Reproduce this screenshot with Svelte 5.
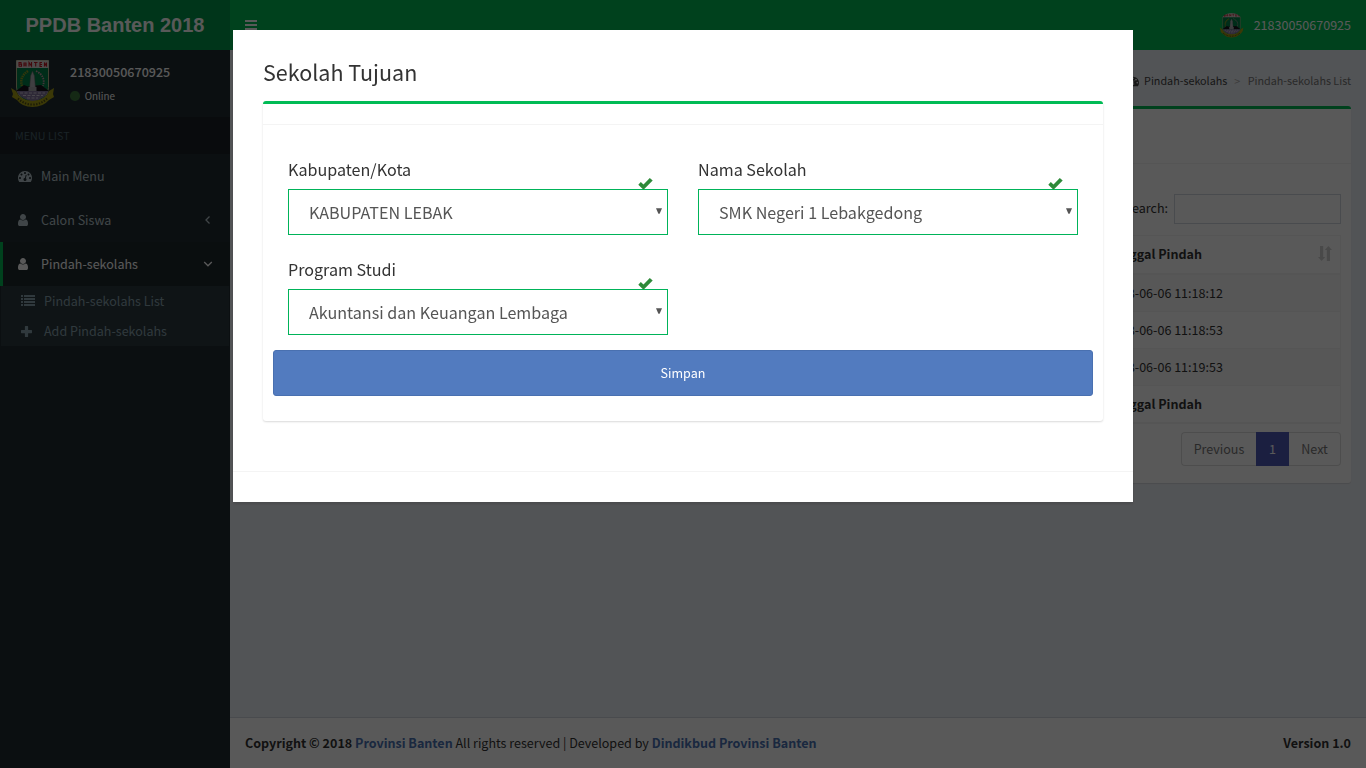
<script>
  const rows = ['2018-06-06 11:18:12', '2018-06-06 11:18:53', '2018-06-06 11:19:53'];
  const fields = [
    { label: 'Kabupaten/Kota', value: 'KABUPATEN LEBAK' },
    { label: 'Nama Sekolah', value: 'SMK Negeri 1 Lebakgedong' },
    { label: 'Program Studi', value: 'Akuntansi dan Keuangan Lembaga' }
  ];
</script>

{#snippet emblem()}
  <svg viewBox="0 0 45 48" class="emblem" preserveAspectRatio="none">
    <path d="M6.500 .5h32v27q0 12-16 16Q6.500 39 6.500 27z" fill="#008048" stroke="#b9b78c" stroke-width="1" />
    <path d="M6.500 .5h32V8h-32z" fill="#dcd6d4" />
    <path d="M9 2v4.500M9 2.500h2v1.800H9h2.500v2H9M14 6.500V3h2v3.500M14 5h2M19 6.500V2.500l2.500 3.500V2M24 2.500h3.500M25.700 2.500v4M32 2.500h-2v4h2M30 4.500h2M34.500 6.500v-4l2 4v-4" fill="none" stroke="#c01822" stroke-width="1.100" />
    <path d="M18 11q-9 6-6 15" fill="none" stroke="#8f9a20" stroke-width="2.500" stroke-dasharray="1.500 .8" />
    <path d="M26 11q10 5 7 15" fill="none" stroke="#c995a5" stroke-width="1.800" stroke-dasharray="1.500 1" />
    <path d="M6 31l8-6 4 1.500 8-1 5-.5 8 6z" fill="#17131b" />
    <path d="M7 31h31q-1 7-15.500 11Q8 37 7 31z" fill="#83759f" />
    <path d="M10 33h25M13 35.500h20M17 38h11" stroke="#cfc8d8" stroke-width="1.200" stroke-dasharray="3 1.500" />
    <path d="M19.500 29l1-13 2-5 2 5 1 13z" fill="#b4b4ba" stroke="#666" stroke-width=".5" />
    <path d="M18.500 27h8v4h-8z" fill="#a8a8b0" />
    <path d="M1 28l5 3q3 9 16.500 10Q36 40 39 31l5-3-1 6 1 3-5 3q-6 7-16.500 7T7 40l-5-3 1-3z" fill="#a8a014" />
    <path d="M8 38.500q6 6 14.500 6T37 38.500" fill="none" stroke="#4b4a15" stroke-width="2" stroke-dasharray="1.300 1.500" />
  </svg>
{/snippet}

{#snippet user()}
  <svg class="ic" width="10" height="14" viewBox="256 0 1280 1792"><path fill="currentColor" d="M1536 1399q0 109-62.500 187t-150.500 78h-854q-88 0-150.500-78t-62.500-187q0-85 8.500-160.500t31.500-152 58.500-131 94-89 134.500-34.500q131 128 313 128t313-128q76 0 134.500 34.500t94 89 58.500 131 31.500 152 8.500 160.500zm-256-887q0 159-112.500 271.500t-271.500 112.500-271.500-112.500-112.500-271.500 112.500-271.500 271.500-112.500 271.500 112.500 112.500 271.500z" /></svg>
{/snippet}

{#snippet gauge(size)}
  <svg class="ic" width={size} height={size} viewBox="0 0 1792 1792"><path fill="currentColor" d="M384 1152q0-53-37.500-90.500t-90.500-37.500-90.500 37.500-37.500 90.500 37.500 90.500 90.500 37.500 90.500-37.500 37.500-90.500zm192-448q0-53-37.500-90.500t-90.500-37.500-90.500 37.500-37.500 90.500 37.500 90.500 90.500 37.500 90.500-37.500 37.500-90.500zm428 481l101-382q6-26-7.500-48.500t-38.500-29.500-48 6.500-30 39.500l-101 382q-60 5-107 43.500t-63 98.500q-20 77 20 146t117 89 146-20 89-117q16-60-6-117t-72-91zm660-33q0-53-37.500-90.500t-90.500-37.500-90.500 37.500-37.500 90.500 37.500 90.500 90.500 37.500 90.500-37.500 37.500-90.500zm-640-640q0-53-37.500-90.500t-90.500-37.500-90.500 37.500-37.500 90.500 37.500 90.500 90.500 37.500 90.500-37.500 37.500-90.500zm448 192q0-53-37.500-90.500t-90.500-37.500-90.500 37.500-37.500 90.500 37.500 90.500 90.500 37.500 90.500-37.500 37.500-90.500zm320 448q0 261-141 483-19 29-54 29h-1402q-35 0-54-29-141-221-141-483 0-182 71-348t191-286 286-191 348-71 348 71 286 191 191 286 71 348z" /></svg>
{/snippet}

<div class="page">
  <header>
    <div class="logo">PPDB Banten 2018</div>
    <nav>
      <svg width="12" height="12" viewBox="0 0 12 12" fill="#fff"><path d="M0 1h12v2H0zM0 5h12v2H0zM0 9h12v2H0z" /></svg>
      <div class="account"><span class="avatar">{@render emblem()}</span><span>21830050670925</span></div>
    </nav>
  </header>

  <div class="columns">
    <aside>
      <div class="panel">
        <div class="crest">{@render emblem()}</div>
        <div class="who">
          <strong>21830050670925</strong>
          <span class="status"><i></i>Online</span>
        </div>
      </div>
      <div class="section">MENU LIST</div>
      <div class="item">{@render gauge(14)}<span class="t">Main Menu</span></div>
      <div class="item">{@render user()}<span class="t">Calon Siswa</span>
        <svg class="caret" width="10" height="10" viewBox="0 0 10 10"><path d="M6.500 1.500L3 5l3.500 3.500" /></svg>
      </div>
      <div class="item active">{@render user()}<span class="t">Pindah-sekolahs</span>
        <svg class="caret" width="10" height="10" viewBox="0 0 10 10"><path d="M1.200 3L5 6.800 8.800 3" /></svg>
      </div>
      <div class="sub">
        <div>
          <svg width="14" height="12" viewBox="0 0 14 12" fill="currentColor"><path d="M0 0h2v2H0zM3 0h11v2H3zM0 3h2v2H0zM3 3h11v2H3zM0 6h2v2H0zM3 6h11v2H3zM0 9h2v2H0zM3 9h11v2H3z" /></svg>
          <span>Pindah-sekolahs List</span>
        </div>
        <div>
          <svg width="11" height="11" viewBox="0 0 11 11" fill="currentColor"><path d="M4.500 0h2q.6 0 .6.600V4h3.300q.6 0 .6.600v2q0 .6-.6.600H7.100v3.200q0 .6-.6.600h-2q-.6 0-.6-.6V7.200H.6Q0 7.200 0 6.600v-2Q0 4 .6 4h3.300V.6q0-.6.600-.6z" /></svg>
          <span>Add Pindah-sekolahs</span>
        </div>
      </div>
    </aside>

    <div class="content">
      <main>
        <div class="crumbs">{@render gauge(12)}<span class="home">Pindah-sekolahs</span><span class="sep">&gt;</span><span class="here">Pindah-sekolahs List</span></div>
        <div class="box list">
          <div class="listhead"></div>
          <div class="listbody">
            <div class="search"><span>Search:</span><input aria-label="Search" /></div>
            <div class="table">
              <div class="row head"><span>Tanggal Pindah</span>
                <svg width="14" height="15" viewBox="0 0 14 15" fill="#d2d2d2"><path d="M2 0h3.200v11h2L3.600 15 0 11h2zM8.800 15H12V4h2L10.400 0 6.800 4h2z" /></svg>
              </div>
              {#each rows as r, i}
                <div class="row" class:odd={i % 2 === 0}><span>{r}</span></div>
              {/each}
              <div class="row foot"><span>Tanggal Pindah</span></div>
            </div>
            <div class="pager"><span class="prev">Previous</span><span class="cur">1</span><span class="next">Next</span></div>
          </div>
        </div>
      </main>
      <footer>
        <div><b>Copyright © 2018 <a>Provinsi Banten</a></b> All rights reserved | Developed by <b><a>Dindikbud Provinsi Banten</a></b></div>
        <b>Version 1.0</b>
      </footer>
    </div>
  </div>
</div>

<div class="overlay">
  <div class="modal">
    <div class="inner">
      <h3>Sekolah Tujuan</h3>
      <div class="box form">
        <div class="formhead"></div>
        <div class="formbody">
          <div class="grid">
            {#each fields as f}
              <div class="field">
                <div class="label">{f.label}</div>
                <svg class="ok" width="15" height="12" viewBox="0 0 15 12"><path d="M.3 6.800L2.800 4.100 5.500 6.400 11.800 0 14.700 2.500 5.500 11.700z" fill="#2f8a3a" /></svg>
                <div class="select"><span>{f.value}</span>
                  <svg width="6" height="6" viewBox="0 0 6 6"><path d="M0 .2h6L3.600 5.800H2.400z" fill="#555" /></svg>
                </div>
              </div>
            {/each}
          </div>
          <button>Simpan</button>
        </div>
      </div>
    </div>
    <div class="modalfoot"></div>
  </div>
</div>

<style>
  :global(body) { overflow: hidden; }
  .page, .overlay { font-family: "Noto Sans CJK JP", "Noto Sans CJK SC", sans-serif; font-size: 12.54px; line-height: 20px; color: #333; box-sizing: border-box; }
  .page :global(*), .overlay :global(*) { box-sizing: border-box; }
  .page { width: 1366px; height: 768px; display: flex; flex-direction: column; overflow: hidden; }
  svg { display: block; flex: none; }
  header { display: flex; height: 50px; flex: none; color: #fff; }
  .logo { width: 230px; background: #00994a; font: bold 20px/50px "Liberation Sans", Arial, sans-serif; text-align: center; }
  nav { flex: 1; background: #00bb55; display: flex; align-items: center; justify-content: space-between; padding: 0 15px; }
  .account { display: flex; align-items: center; gap: 10px; }
  .avatar { width: 25px; height: 25px; border-radius: 50%; overflow: hidden; }
  .emblem { width: 100%; height: 100%; }
  .columns { flex: 1; display: flex; min-height: 0; }
  aside { width: 230px; background: #222d32; color: #b8c7ce; }
  .panel { height: 67px; padding: 10px; display: flex; }
  .crest { width: 45px; height: 48px; }
  .who { padding: 2px 0 0 15px; color: #fff; display: flex; flex-direction: column; }
  .who strong { font-weight: 500; letter-spacing: .02px; line-height: 20px; }
  .status { font-size: 9.850px; line-height: 16px; margin-top: 6px; display: flex; align-items: center; }
  .status i { width: 9.500px; height: 9.500px; border-radius: 50%; background: #3c763d; margin-right: 5.200px; }
  .section { height: 37px; padding-left: 15px; line-height: 37px; font-size: 10.750px; color: #4b646f; background: #1a2226; }
  .item { height: 44px; display: flex; align-items: center; border-left: 3px solid transparent; padding: 0 17px 0 15px; }
  .item .t { flex: 1; }
  .item > :global(.ic) { margin-right: 9px; }
  .item > :global(.ic[width="10"]) { margin-right: 13px; }
  .caret { fill: none; stroke: currentColor; stroke-width: 1.300; }
  .active { background: #1e282c; color: #fff; border-color: #00bb55; }
  .sub { margin: 0 1px; background: #2c3b41; color: #8aa4af; }
  .sub div { height: 30px; display: flex; align-items: center; padding-left: 20px; }
  .sub svg { margin-right: 9px; }
  .sub svg[width="11"] { margin-right: 12px; }
  .content { flex: 1; display: flex; flex-direction: column; background: #ecf0f5; }
  main { flex: 1; padding: 21px 15px 0; }
  .crumbs { display: flex; justify-content: flex-end; align-items: center; font-size: 10.750px; height: 20px; margin-bottom: 15px; color: #444; }
  .crumbs .home { margin-left: 5px; }
  .sep { color: #aaa; margin: 0 7.500px 0 7px; }
  .here { color: #777; }
  .box { background: #fff; border-top: 3px solid #00bb55; border-radius: 3px; box-shadow: 0 1px 1px rgba(0, 0, 0, .1); }
  .list { height: 377px; }
  .listhead { height: 55px; border-bottom: 1px solid #f4f4f4; }
  .listbody { padding: 30px 10px 0; display: flex; flex-direction: column; align-items: flex-end; }
  .search { display: flex; align-items: center; gap: 6px; }
  .search span { margin-top: -2px; }
  .search input { width: 167px; height: 30px; border: 1px solid #d2d6de; background: #fff; padding: 0; }
  .table { width: 243px; margin-top: 11px; border: 1px solid #f4f4f4; }
  .row { height: 37px; padding: 0 8px; display: flex; align-items: center; justify-content: space-between; border-bottom: 1px solid #f4f4f4; }
  .row.odd { background: #f9f9f9; }
  .head { height: 39px; padding-bottom: 2px; border-bottom-width: 2px; font-weight: 700; }
  .foot { font-weight: 700; }
  .pager { display: flex; margin-top: 8px; height: 34px; line-height: 32px; color: #777; }
  .pager span { border: 1px solid #ddd; text-align: center; }
  .pager .prev { width: 75px; border-radius: 4px 0 0 4px; border-right: 0; }
  .pager .cur { width: 33px; background: #4e5bb8; border-color: #4e5bb8; color: #fff; }
  .pager .next { width: 52px; border-left: 0; border-radius: 0 4px 4px 0; }
  footer { height: 51px; background: #fff; border-top: 1px solid #d2d6de; display: flex; align-items: center; justify-content: space-between; padding: 0 15px; }
  footer a { color: #4a72b4; }
  .overlay { position: fixed; inset: 0; background: rgba(0, 0, 0, .65); padding: 30px 233px; }
  .modal { width: 900px; height: 472px; background: #fff; box-shadow: 0 2px 3px rgba(0, 0, 0, .125); }
  .inner { height: 441px; padding: 29px 30px 30px; }
  h3 { margin: 0; font-size: 21.500px; font-weight: 400; line-height: 26px; height: 42px; }
  .form { height: 320px; }
  .form { box-shadow: 0 1px 2px rgba(0, 0, 0, .15); }
  .formhead { height: 21px; border-bottom: 1px solid #f4f4f4; }
  .formbody { padding: 34px 10px 0; }
  .grid { display: grid; grid-template-columns: 380px 380px; column-gap: 30px; row-gap: 24px; padding: 0 15px; }
  .field { position: relative; height: 76px; }
  .label { font-size: 16.120px; line-height: 20px; height: 30px; }
  .ok { position: absolute; right: 15px; top: 18.500px; }
  .select { height: 46px; border: 1px solid #00b359; padding: 0 5px 0 20px; display: flex; align-items: center; justify-content: space-between; font-size: 16.120px; color: #555; }
  .select svg { margin-top: -2px; }
  button { display: block; width: 100%; height: 46px; margin-top: 15px; background: #527bbf; border: 1px solid #4970b0; border-radius: 3px; color: #fff; font: inherit; }
  .modalfoot { border-top: 1px solid #f4f4f4; height: 31px; }
</style>
